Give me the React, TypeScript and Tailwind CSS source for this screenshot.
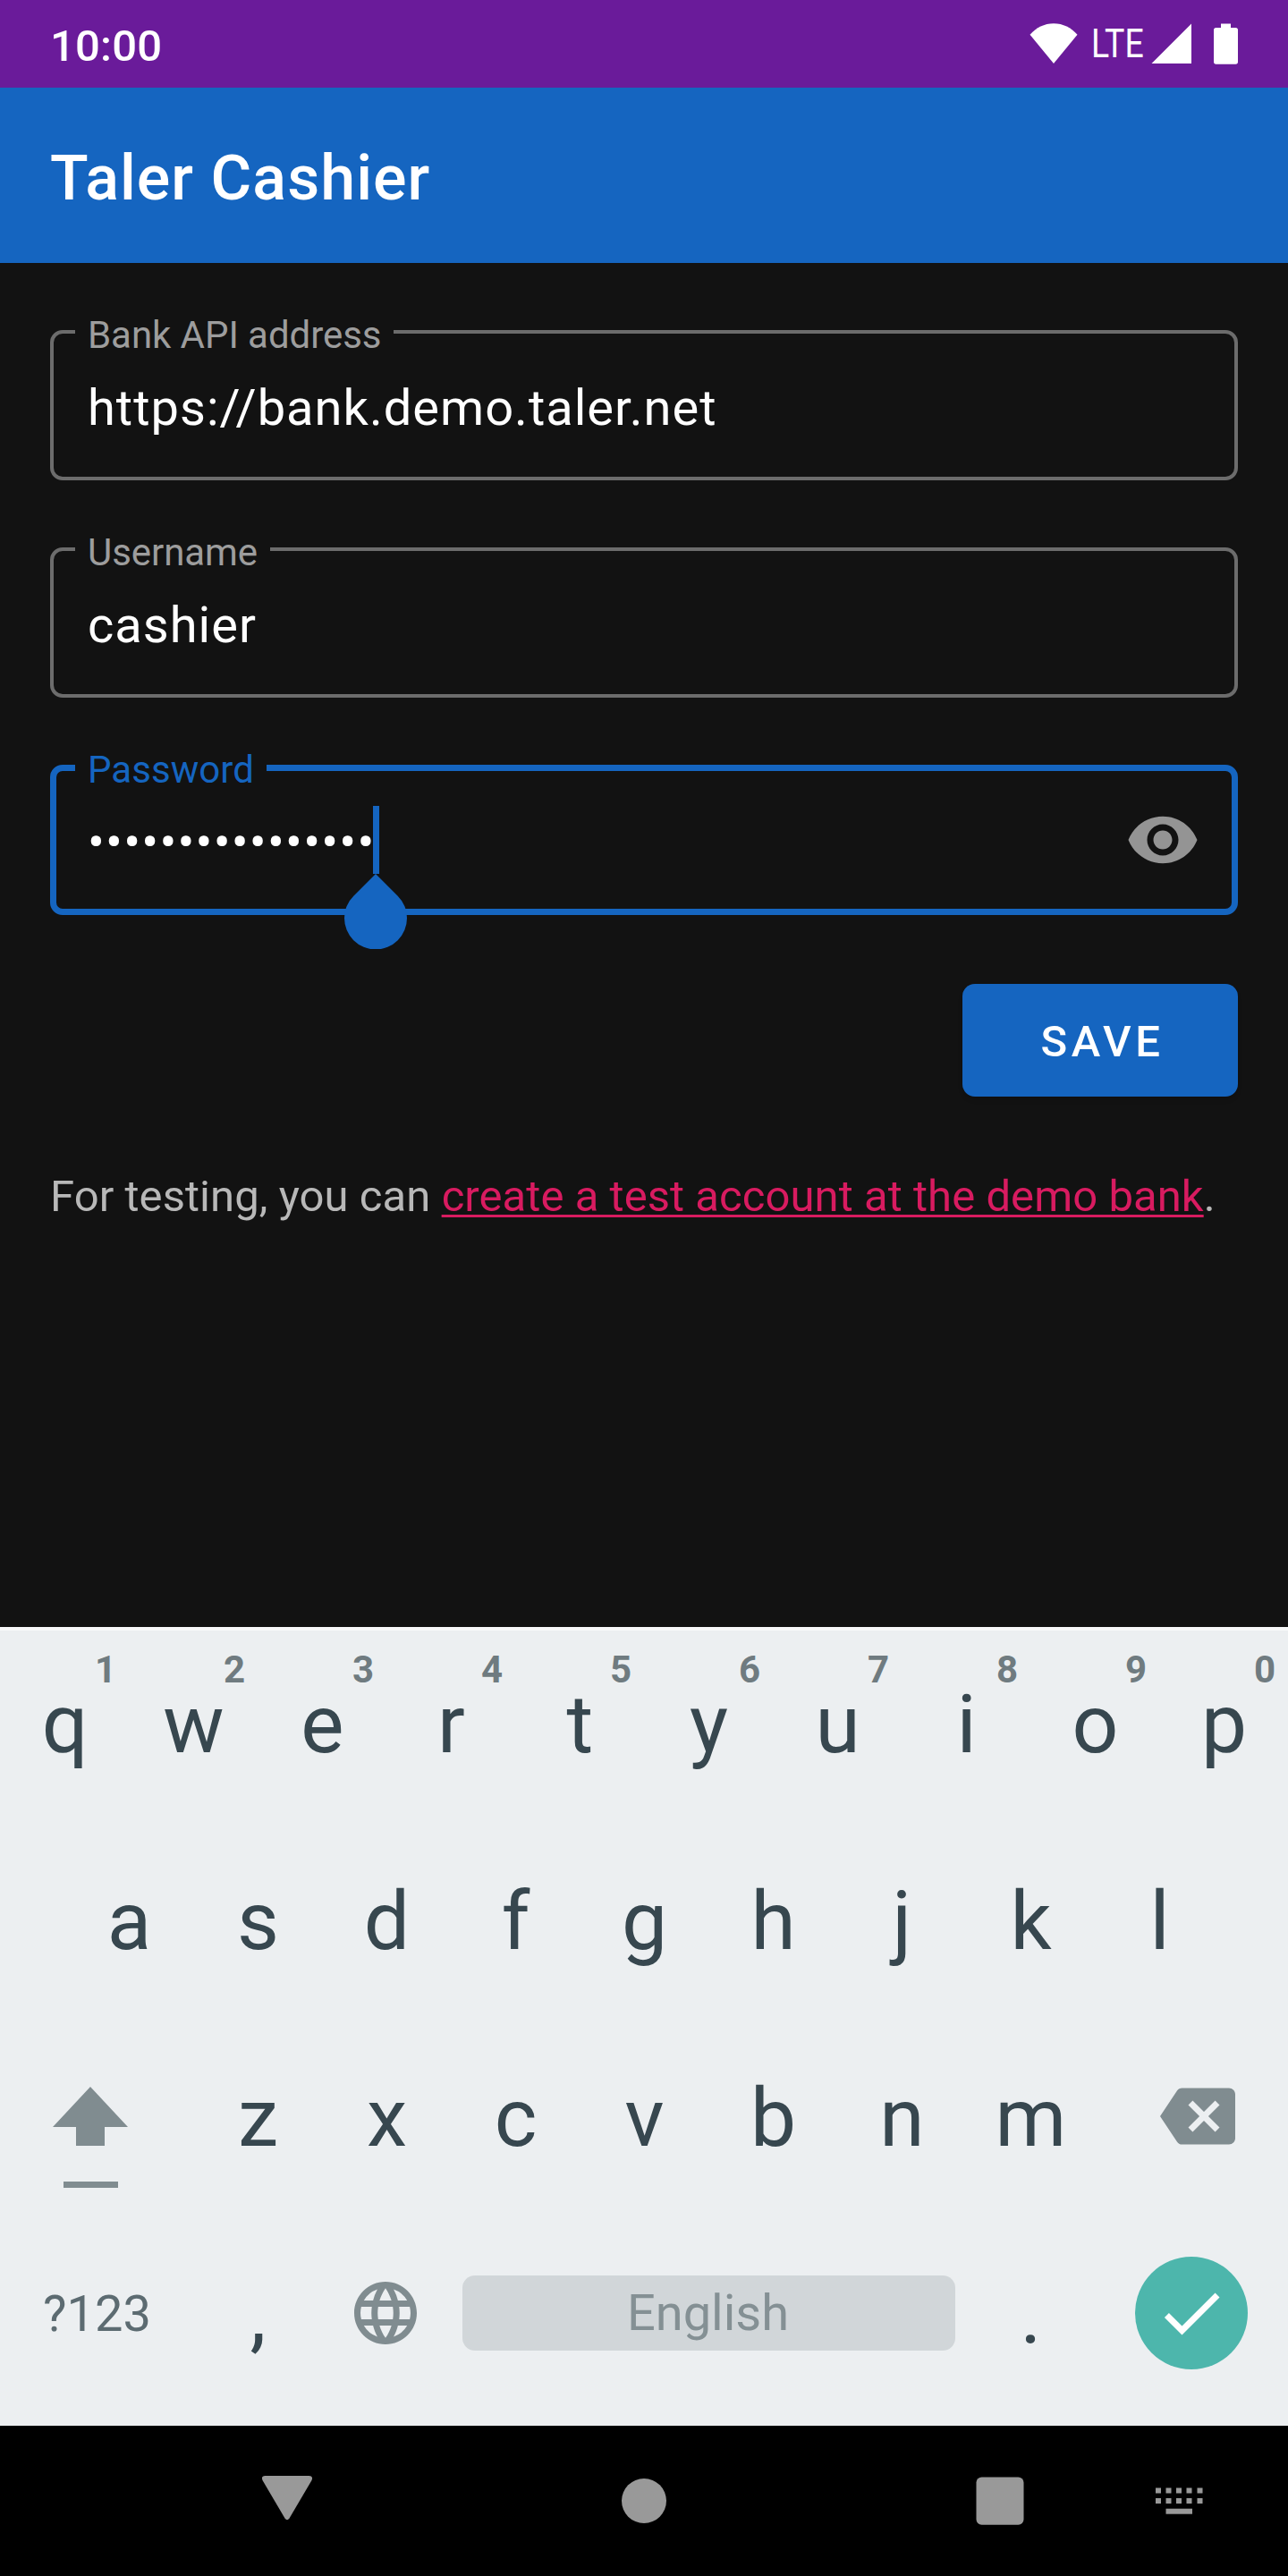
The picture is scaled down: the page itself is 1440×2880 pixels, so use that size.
import type { ReactNode } from "react";
import { MdBackspace, MdCheck, MdLanguage, MdVisibility } from "react-icons/md";

function StatusBar() {
  return (
    <header className="flex h-[98px] items-center justify-between bg-[#6a1b9a] px-[56px] text-white">
      <span className="mt-[4px] text-[49px] leading-[57px] font-medium tracking-[0.2px]">10:00</span>
      <div className="flex h-[46px] items-start">
        <svg className="h-[46px] w-[54px]" viewBox="0 0 54 46" fill="currentColor">
          <path d="M0.5 12.8C7.5 5 16.5 0.3 27 0.3S46.500 5 53.500 12.800L27 45Z" />
        </svg>
        <span className="ml-[15px] w-[60px] origin-left scale-x-[0.85] text-[44px] leading-[46px]">LTE</span>
        <svg className="ml-[7px] h-[46px] w-[46px]" viewBox="0 0 46 46" fill="currentColor">
          <path d="M45 0.500V45H0.500Z" />
        </svg>
        <svg className="ml-[23px] h-[46px] w-[28px]" viewBox="0 0 28 46" fill="currentColor">
          <path d="M9 0.500H20V5H25.500Q28 5 28 7.500V43Q28 45.700 25.500 45.700H3.500Q1 45.700 1 43V7.500Q1 5 3.500 5H9Z" />
        </svg>
      </div>
    </header>
  );
}

function Field({ label, focused = false, children }: { label: string; focused?: boolean; children: ReactNode }) {
  return (
    <div
      className={
        focused
          ? "relative flex h-[168px] items-center rounded-[14px] border-[7px] border-[#1565c0] pr-[35px] pl-[35px]"
          : "relative flex h-[168px] items-center rounded-[14px] border-4 border-[#6c6c6c] pr-[38px] pl-[38px]"
      }
    >
      <span
        className={
          focused
            ? "absolute -top-[26px] left-[21px] bg-[#121212] px-[14px] text-[42px] leading-[50px] tracking-[0.05px] text-[#1565c0]"
            : "absolute -top-[23px] left-[24px] bg-[#121212] px-[14px] text-[42px] leading-[50px] tracking-[-0.06px] text-[#9d9d9d]"
        }
      >
        {label}
      </span>
      {children}
    </div>
  );
}

function LoginForm() {
  return (
    <main className="flex h-[1525px] flex-col bg-[#121212] px-[56px] pt-[75px]">
      <div className="flex flex-col gap-[75px]">
        <Field label="Bank API address">
          <span className="mt-[6px] text-[56px] leading-[66px] tracking-[1.020px] text-white">https://bank.demo.taler.net</span>
        </Field>
        <Field label="Username">
          <span className="mt-[6px] text-[56px] leading-[66px] tracking-[1.020px] text-white">cashier</span>
        </Field>
        <Field label="Password" focused>
          <div className="relative mt-[6px]">
            <span className="block text-[56px] leading-[66px] tracking-[1.200px] text-white">••••••••••••••••</span>
            <span className="absolute -top-[8px] left-[319px] h-[76px] w-[7px] bg-[#1565c0]" />
            <svg className="absolute top-[68px] left-[287px] h-[84px] w-[70px]" viewBox="0 0 70 84" fill="#1565c0">
              <path d="M35 0L59.700 24.700A35 35 0 1 1 10.300 24.700Z" />
            </svg>
          </div>
          <MdVisibility className="ml-auto h-[84px] w-[84px] text-[#949494]" />
        </Field>
      </div>
      <button className="mt-[77px] flex h-[126px] w-[308px] items-center justify-center self-end rounded-[14px] bg-[#1565c0] pt-[4px] pl-[5px] text-[49px] leading-[58px] font-medium tracking-[4.600px] text-white shadow-md">
        SAVE
      </button>
      <p className="mt-[83px] text-[49px] leading-[58px] tracking-[0.060px] whitespace-nowrap text-[#b8b8b8]">
        For testing, you can{" "}
        <a className="text-[#d81b60] underline decoration-[3px] underline-offset-[4px]">create a test account at the demo bank</a>.
      </p>
    </main>
  );
}

function Key({ char, hint }: { char: string; hint?: string }) {
  return (
    <div className="relative flex h-[220px] w-[144px] justify-center pl-px text-[91px] leading-[106px] text-[#37474f]">
      <span>{char}</span>
      {hint && (
        <span className="absolute -top-[33px] right-[14px] text-[42px] leading-[50px] font-bold text-[#6f7b80]">{hint}</span>
      )}
    </div>
  );
}

function Keyboard() {
  return (
    <section className="flex h-[893px] flex-col border-t-4 border-[#f8f9fa] bg-[#eceff1] pt-[52px]">
      <div className="flex h-[220px]">
        {"qwertyuiop".split("").map((c, i) => (
          <Key key={c} char={c} hint={String((i + 1) % 10)} />
        ))}
      </div>
      <div className="flex h-[220px] justify-center">
        {"asdfghjkl".split("").map((c) => (
          <Key key={c} char={c} />
        ))}
      </div>
      <div className="flex h-[220px]">
        <div className="flex w-[216px] pt-[18px] pl-[59px]">
          <svg className="h-[114px] w-[84px] text-[#808c90]" viewBox="0 0 84 114" fill="currentColor">
            <path d="M42 0L84 45H58V66H26V45H0ZM12 106H73V113H12Z" />
          </svg>
        </div>
        {"zxcvbnm".split("").map((c) => (
          <Key key={c} char={c} />
        ))}
        <div className="flex w-[216px] pt-[9px] pl-[73px]">
          <MdBackspace className="h-[84px] w-[84px] text-[#808c90]" />
        </div>
      </div>
      <div className="flex h-[177px]">
        <div className="flex w-[216px] justify-center pt-[19px] pl-px text-[56px] leading-[66px] text-[#5c6b71]">?123</div>
        <Key char="," />
        <div className="flex w-[144px] justify-center pt-[9px] pr-[2px]">
          <MdLanguage className="h-[84px] w-[84px] text-[#808c90]" />
        </div>
        <div className="mt-[9px] ml-[13px] flex h-[84px] w-[551px] justify-center rounded-[14px] bg-[#d1d6d9] pt-[9px] pr-[2px] text-[56px] leading-[66px] text-[#849094]">
          English
        </div>
        <div className="ml-[12px] flex">
          <Key char="." />
        </div>
        <div className="-mt-[12px] ml-[45px] flex h-[126px] w-[126px] items-center justify-center rounded-full bg-[#4db6ac]">
          <MdCheck className="h-[84px] w-[84px] text-white" />
        </div>
      </div>
    </section>
  );
}

function NavigationBar() {
  return (
    <nav className="flex h-[168px] items-start bg-black pt-[56px] text-[#999999]">
      <svg className="ml-[292px] h-[54px] w-[57px]" viewBox="0 0 57 54" fill="currentColor">
        <path d="M4.500 0H53.500Q58.500 0 56.500 5L31.500 47.500Q29 51 26.500 47.500L1.500 5Q-0.500 0 4.500 0Z" />
      </svg>
      <span className="mt-[3px] ml-[346px] h-[50px] w-[50px] rounded-full bg-[#999999]" />
      <svg className="mt-[1px] ml-[346px] h-[55px] w-[55px]" viewBox="0 0 55 55" fill="currentColor">
        <rect x="0.500" y="0.500" width="53" height="53.300" rx="6" />
      </svg>
      <svg className="mt-[12px] ml-[145px] h-[32px] w-[55px]" viewBox="0 0 55 32" fill="currentColor">
        {[1.5, 13].map((y) =>
          [1, 12.5, 24, 35.5, 47.5].map((x) => <rect key={x + "-" + y} x={x} y={y} width="6" height="6" />),
        )}
        <rect x="12.500" y="24.700" width="29.500" height="6" />
      </svg>
    </nav>
  );
}

export default function App() {
  return (
    <div className="flex h-[2880px] w-[1440px] flex-col overflow-hidden bg-[#121212] font-['Roboto',sans-serif]">
      <StatusBar />
      <div className="flex h-[196px] items-center bg-[#1565c0] px-[56px]">
        <h1 className="mt-[6px] text-[70px] leading-[82px] font-medium tracking-[1.050px] text-white">Taler Cashier</h1>
      </div>
      <LoginForm />
      <Keyboard />
      <NavigationBar />
    </div>
  );
}
